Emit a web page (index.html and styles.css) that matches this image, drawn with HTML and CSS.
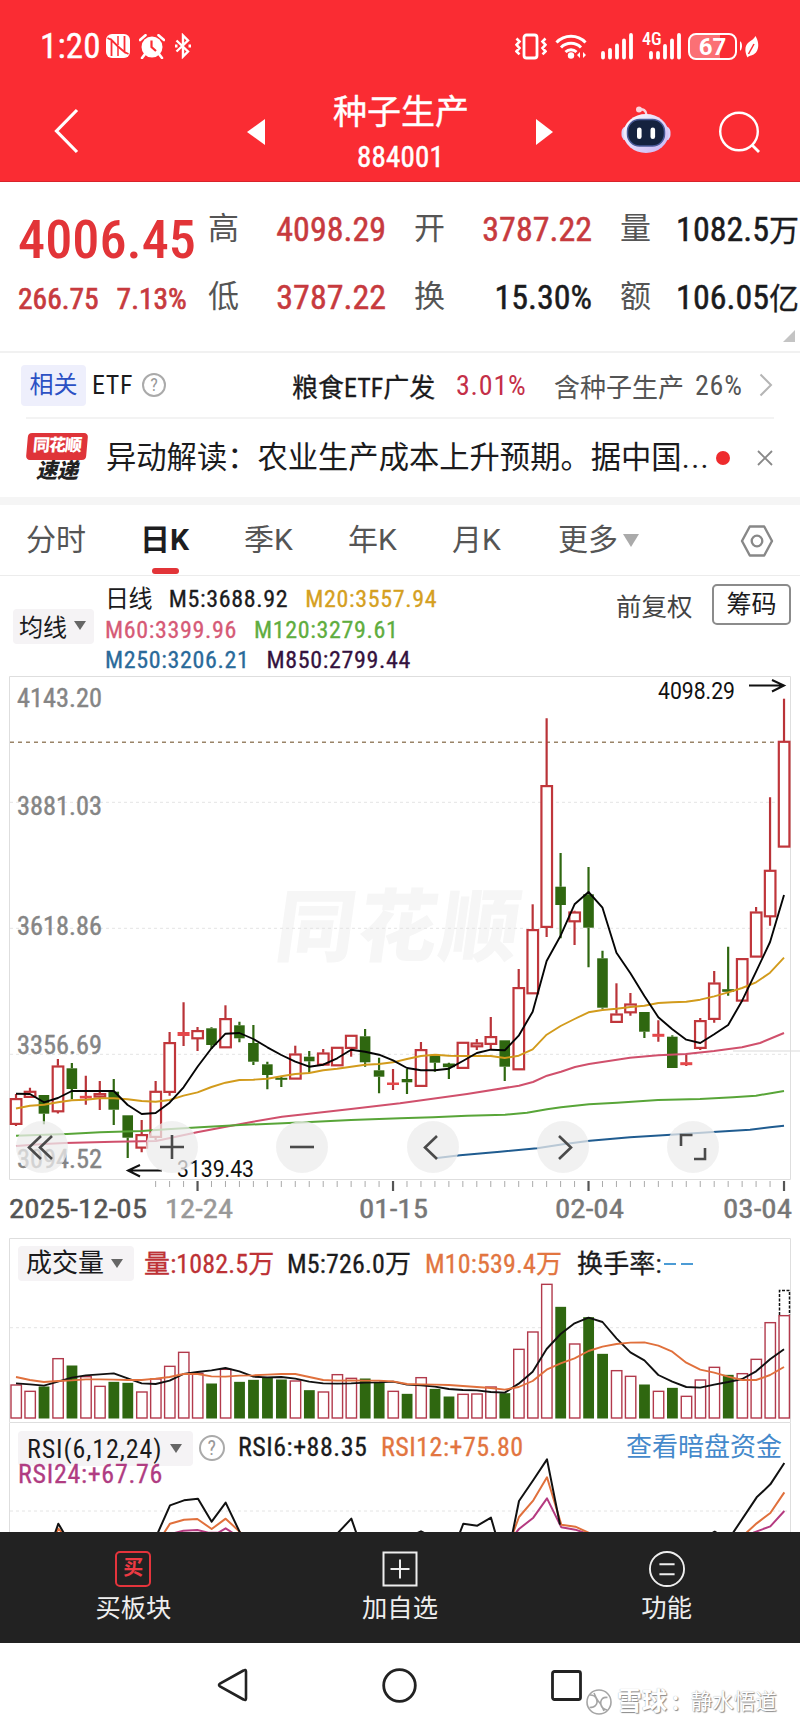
FILE: index.html
```
<!DOCTYPE html>
<html lang="zh-CN">
<head>
<meta charset="utf-8">
<title>种子生产 884001</title>
<link rel="stylesheet" href="styles.css">
</head>
<body>
<header class="header">
  <div class="status">
    <div class="status-left">
      <span class="clock">1:20</span>
      <svg class="i-nfc" width="24" height="24" viewBox="0 0 24 24"><rect x="0" y="0" width="24" height="24" rx="6" fill="#fff"/><path d="M5.500 22V6L12 12.500L18.500 18V2M1.500 4L5.500 6M22.500 20L18.500 18" fill="none" stroke="#fa2c33" stroke-width="1.800"/><path d="M12 2v9M12 22v-9" stroke="#fa2c33" stroke-width="1.500"/></svg>
      <svg class="i-alarm" width="26" height="25" viewBox="0 0 26 25"><path d="M1 6L6.500 1.200M25 6L19.500 1.200M6 20L3 24M20 20L23 24" stroke="#fff" stroke-width="2.600" stroke-linecap="round"/><circle cx="13" cy="13" r="10.500" fill="#fff"/><path d="M12.500 6.500V13L17 17" fill="none" stroke="#fa2c33" stroke-width="2.200"/></svg>
      <svg class="i-bt" width="18" height="26" viewBox="0 0 18 26"><path d="M2.500 7.500L14 18.500L9 23.500V2.500L14 7.500L2.500 18.500" fill="none" stroke="#fff" stroke-width="2.400"/><path d="M1 13h2.500M14.500 13H17" stroke="#fff" stroke-width="2.800"/></svg>
    </div>
    <div class="status-right">
      <svg width="32" height="27" viewBox="0 0 32 27"><rect x="9" y="2" width="13" height="23" rx="2.500" fill="none" stroke="#fff" stroke-width="2.800"/><path d="M1.500 5.500l3 3-3 3.300 3 3.300-3 3.300 3 3M30.500 5.500l-3 3 3 3.300-3 3.300 3 3.300-3 3" fill="none" stroke="#fff" stroke-width="2.600"/></svg>
      <svg class="i-wifi" width="33" height="27" viewBox="0 0 33 27"><path d="M1.500 9.500a20 20 0 0 1 29 0M6 14.500a14 14 0 0 1 20 0M10.500 19a8 8 0 0 1 11 0" fill="none" stroke="#fff" stroke-width="3"/><circle cx="16" cy="22.500" r="3.200" fill="#fff"/><path d="M25 19v6l-3-3zM28 19v6l3-3z" fill="#fff"/></svg>
      <svg class="i-sig" width="32" height="27" viewBox="0 0 32 27"><path d="M2 20v4.500M9 17v7.500M16 12.500v12M23 7.500v17M30 2v22.500" stroke="#fff" stroke-width="3.800" stroke-linecap="round"/></svg>
      <div class="net"><span class="net-label">4G</span><svg width="32" height="27" viewBox="0 0 32 27"><path d="M2 20v4.500M9 20v4.500M16 13v11.500M23 7.500v17M30 2v22.500" stroke="#fff" stroke-width="3.800" stroke-linecap="round"/></svg></div>
      <div class="battery">67</div>
      <svg class="i-leaf" width="20" height="25" viewBox="0 0 20 25"><path d="M0 8q2 4 0 8z" fill="#fff" stroke="#fff" stroke-width="2"/><path d="M15.500 2C18 6 20 13 16 18.500C13 22 9 21 7.500 23.500C5 19 4 12 8.500 8.500C11 6.500 14 5 15.500 2z" fill="#fff"/><path d="M8.500 20L14 10" stroke="#fa2c33" stroke-width="1.500"/></svg>
    </div>
  </div>
  <nav class="nav">
    <svg class="back" width="26" height="46" viewBox="0 0 26 46"><path d="M24 2L3.500 23L24 44" fill="none" stroke="#fff" stroke-width="3.200"/></svg>
    <svg class="prev" width="18" height="26" viewBox="0 0 18 26"><path d="M18 0v26L0 13z" fill="#fff"/></svg>
    <div class="name"><h1>种子生产</h1><p>884001</p></div>
    <svg class="next" width="17" height="26" viewBox="0 0 17 26"><path d="M0 0v26L17 13z" fill="#fff"/></svg>
    <svg class="robot" width="50" height="48" viewBox="0 0 50 48"><defs><linearGradient id="head" x1="0" y1="0" x2="1" y2="1"><stop offset="0" stop-color="#fff"/><stop offset="1" stop-color="#c5b2f4"/></linearGradient></defs><path d="M17 3.500Q25 2 25.500 9" fill="none" stroke="#f9d5e2" stroke-width="2.400"/><circle cx="18" cy="3.500" r="3" fill="#fbd5df"/><rect x="0.500" y="20" width="49" height="15" rx="6" fill="#d9d2fa"/><ellipse cx="25" cy="27.500" rx="22.500" ry="19.500" fill="url(#head)"/><rect x="6.500" y="13.500" width="37" height="26.500" rx="12" fill="#15223f" stroke="#4a5a98" stroke-width="1.500"/><rect x="16" y="21.500" width="4.600" height="11.500" rx="2.300" fill="#fff"/><rect x="29.500" y="21.500" width="4.600" height="11.500" rx="2.300" fill="#fff"/></svg>
    <svg class="search" width="42" height="43" viewBox="0 0 42 43"><circle cx="20" cy="20.500" r="18.800" fill="none" stroke="#fff" stroke-width="2.400"/><path d="M33 34l7 7" stroke="#fff" stroke-width="2.800"/></svg>
  </nav>
</header>

<section class="quote">
  <div class="last"><div class="price">4006.45</div><div class="delta"><span>266.75</span><span>7.13%</span></div></div>
  <div class="facts">
    <span class="k">高</span><span class="v up">4098.29</span><span class="k">开</span><span class="v up">3787.22</span><span class="k">量</span><span class="v">1082.5<small>万</small></span>
    <span class="k">低</span><span class="v up">3787.22</span><span class="k">换</span><span class="v">15.30%</span><span class="k">额</span><span class="v">106.05<small>亿</small></span>
  </div>
  <i class="corner"></i>
</section>

<section class="etf">
  <span class="tag">相关</span><span class="etf-label">ETF</span>
  <span class="help">?</span>
  <span class="fund">粮食ETF广发</span><span class="fund-pct">3.01%</span><span class="hold">含种子生产</span><span class="hold-pct">26%</span>
  <svg class="go" width="14" height="24" viewBox="0 0 14 24"><path d="M1.500 1.500L12 12L1.500 22.500" fill="none" stroke="#b5b5b5" stroke-width="2"/></svg>
</section>

<section class="news">
  <div class="brand"><span class="brand-top">同花顺</span><span class="brand-bottom">速递</span></div>
  <p>异动解读：农业生产成本上升预期。据中国<span class="dots">...</span></p>
  <i class="dot"></i>
  <svg class="close" width="16" height="16" viewBox="0 0 16 16"><path d="M1 1l14 14M15 1L1 15" stroke="#888" stroke-width="1.800"/></svg>
</section>

<nav class="tabs">
  <span>分时</span><span class="on">日K</span><span>季K</span><span>年K</span><span>月K</span><span class="more">更多<i class="caret"></i></span>
  <svg class="hex" width="34" height="32" viewBox="0 0 34 32"><path d="M9.800 1.500h14.400L32 16l-7.800 14.500H9.800L2 16z" fill="none" stroke="#888" stroke-width="2.400" stroke-linejoin="round"/><circle cx="17" cy="16" r="5.300" fill="none" stroke="#888" stroke-width="2.300"/></svg>
</nav>

<section class="legend">
  <button class="pick ma">均线<i class="caret"></i></button>
  <div class="ma-list">
    <div><span>日线</span><span class="m5">M5:3688.92</span><span class="m20">M20:3557.94</span></div>
    <div><span class="m60">M60:3399.96</span><span class="m120">M120:3279.61</span></div>
    <div><span class="m250">M250:3206.21</span><span class="m850">M850:2799.44</span></div>
  </div>
  <span class="adjust">前复权</span>
  <button class="chips">筹码</button>
</section>

<section class="kline">
  <svg id="kline" width="800" height="562" viewBox="0 676 800 562"></svg>
  <div class="controls">
    <span><svg width="52" height="52"><path d="M25 15L13 26.500L25 38M36 15L24 26.500L36 38"/></svg></span>
    <span><svg width="52" height="52"><path d="M14 26h24M26 14v24"/></svg></span>
    <span><svg width="52" height="52"><path d="M14 26h24"/></svg></span>
    <span><svg width="52" height="52"><path d="M30 15L18 26.500L30 38"/></svg></span>
    <span><svg width="52" height="52"><path d="M22 15L34 26.500L22 38"/></svg></span>
    <span><svg width="52" height="52"><path d="M14 25V14h11.500M27 38h11V27"/></svg></span>
  </div>
</section>

<section class="volume">
  <svg id="volume" width="800" height="184" viewBox="0 1238 800 184"></svg>
  <div class="panel-head vol-head">
    <button class="pick">成交量<i class="caret"></i></button>
    <span class="vol">量:1082.5万</span><span class="v5">M5:726.0万</span><span class="v10">M10:539.4万</span><span class="turn">换手率:</span><span class="none"><i></i><i></i></span>
  </div>
</section>

<section class="rsi">
  <svg id="rsi" width="800" height="110" viewBox="0 1422 800 110"></svg>
  <div class="panel-head rsi-head">
    <button class="pick">RSI(6,12,24)<i class="caret"></i></button>
    <span class="help">?</span>
    <span class="r6">RSI6:+88.35</span><span class="r12">RSI12:+75.80</span><a>查看暗盘资金</a>
  </div>
  <div class="r24">RSI24:+67.76</div>
</section>

<footer class="bar">
  <div><span class="buy-icon">买</span>买板块</div>
  <div><svg width="36" height="36"><path d="M1.500 1.500h33v33h-33zM18 8.500v19M8.500 18h19" fill="none" stroke="#eee" stroke-width="2"/></svg>加自选</div>
  <div><svg width="38" height="36" viewBox="0 0 38 38"><circle cx="19" cy="19" r="18" fill="none" stroke="#eee" stroke-width="2"/><path d="M11 14h16M11 24.500h16" stroke="#eee" stroke-width="2.200"/></svg>功能</div>
</footer>

<div class="system">
  <svg class="s-back" width="31" height="34" viewBox="0 0 31 34"><path d="M29 3.500Q29 1 26.500 2.500L3 15.500Q1 17 3 18.500L26.500 31.500Q29 33 29 30.500z" fill="none" stroke="#222" stroke-width="2.600"/></svg>
  <svg class="s-home" width="35" height="35"><circle cx="17.500" cy="17.500" r="15.800" fill="none" stroke="#222" stroke-width="2.800"/></svg>
  <svg class="s-recent" width="31" height="31"><rect x="1.500" y="1.500" width="28" height="28" rx="2" fill="none" stroke="#222" stroke-width="2.800"/></svg>
  <div class="credit"><svg width="28" height="28" viewBox="0 0 28 28"><g fill="none" stroke="#a5a5a5" stroke-width="1.600"><circle cx="14" cy="14" r="12"/><path d="M5 7q5 0 6.500 4t-1 6.500q-1.500 2-6 2M22 22q-5-1-6-5t1.500-6.500q2-1.500 5-1M9 5q3 7 5 9t5 9"/></g></svg><b>雪球</b><b class="colon">:</b><span>静水悟道</span></div>
</div>
<script src="chart.js"></script>
</body>
</html>
```
FILE: styles.css
```
* { box-sizing: border-box; }
body, h1, p { margin: 0; font-weight: 400; }
i { font-style: normal; display: block; }
svg { display: block; flex: none; }
span, b, a { white-space: nowrap; }
body {
  width: 800px; height: 1727px; overflow: hidden; background: #fff; color: #1b1b1d;
  font-family: Roboto, "Noto Sans CJK SC", sans-serif; font-stretch: 85%;
}
button { font: inherit; border: 0; padding: 0; color: inherit; text-align: left; white-space: nowrap; }

.header { height: 182px; background: #fa2c33; color: #fff; border-bottom: 1px solid #d8242b; }
.status { height: 92px; display: flex; justify-content: space-between; padding: 0 40px 0 40px; }
.status-left, .status-right { display: flex; align-items: center; }
.clock { font-size: 35px; width: 66px; letter-spacing: .2px; -webkit-text-stroke: .4px; }
.i-alarm { margin-left: 9px; }
.i-bt { margin-left: 9px; }
.i-wifi { margin-left: 8px; }
.i-sig { margin-left: 13px; }
.net { display: flex; width: 39px; margin-left: 9px; justify-content: flex-end; position: relative; }
.net-label { position: absolute; left: 0; top: -2px; font-size: 18px; line-height: 16px; font-weight: 500; }
.battery { width: 49px; height: 27px; margin-left: 7px; border: 2px solid #fff; border-radius: 8px; background: linear-gradient(90deg, #fb7075 67%, #fa2c33 67%); font-size: 24px; line-height: 24px; font-weight: 700; text-align: center; font-stretch: 100%; }
.i-leaf { margin-left: 3px; }
.nav { height: 89px; display: grid; grid-template-columns: 194px 86px 203px 85px 98px 42px; padding-left: 53px; align-items: start; }
.back { margin-top: 16px; }
.prev, .next { margin-top: 27px; }
.robot { margin-top: 14px; }
.search { margin-top: 19px; }
.name { width: 135px; text-align: center; }
.name h1 { font-size: 34px; line-height: 40px; white-space: nowrap; -webkit-text-stroke: .4px; }
.name p { font-size: 29px; line-height: 46px; margin-top: 2px; letter-spacing: .2px; -webkit-text-stroke: .5px; }

.quote { height: 171px; display: flex; position: relative; border-bottom: 2px solid #f1f1f1; }
.last { width: 209px; padding: 24px 0 0 18px; color: #e23438; flex: none; }
.price { font-size: 54.300px; line-height: 68px; font-weight: 500; }
.delta { display: flex; gap: 18px; font-size: 29.500px; line-height: 50px; color: #c73a3e; -webkit-text-stroke: .7px; }
.facts { display: grid; grid-template-columns: 30px 148px 59px 147px 59px 148px; grid-template-rows: 68px 67px; padding-top: 13px; margin-left: -1px; font-size: 34px; line-height: 68px; }
.k { font-size: 31px; color: #555; }
.facts .k:nth-child(6n+3), .facts .k:nth-child(6n+5) { padding-left: 28px; }
.v { text-align: right; -webkit-text-stroke: .5px; }
.v small { font-size: 30px; line-height: 1; -webkit-text-stroke: .3px; }
.up { color: #c73a3e; }
.corner { position: absolute; right: 5px; bottom: 9px; border: 6px solid; border-color: transparent #c4c4c4 #c4c4c4 transparent; }

.etf { height: 66px; margin: 0 26px; border-bottom: 2px solid #f3f3f3; display: flex; align-items: center; font-size: 26px; }
.tag { width: 65px; height: 41px; margin-left: -5px; background: #eeeffc; border-radius: 4px; color: #2b50c4; font-size: 24px; line-height: 40px; text-align: center; }
.etf-label { width: 43px; margin-left: 6px; letter-spacing: .6px; }
.help { width: 24px; height: 24px; border: 2px solid #aaa; border-radius: 50%; color: #999; font-size: 18px; line-height: 20px; text-align: center; flex: none; }
.etf .help { margin-left: 7px; }
.fund { width: 149px; margin-left: 126px; -webkit-text-stroke: .3px; }
.fund-pct { width: 71px; margin-left: 15px; color: #c42f48; font-size: 28px; letter-spacing: .8px; }
.hold { width: 129px; margin-left: 27px; color: #555; }
.hold-pct { width: 49px; margin-left: 12px; color: #555; font-size: 28px; letter-spacing: .8px; }
.go { margin-left: 15px; }

.news { height: 86px; border-bottom: 8px solid #f5f5f5; display: flex; align-items: center; padding-left: 27px; }
.brand { width: 60px; height: 51px; text-align: center; font-weight: 900; font-style: italic; }
.brand-top { display: block; height: 27px; background: #df3439; color: #fff; border-radius: 4px; transform: skewX(-5deg); font-size: 17px; line-height: 25px; letter-spacing: -1px; font-style: normal; }
.brand-bottom { display: block; font-size: 21px; line-height: 23px; color: #222; }
.news p { width: 607px; margin-left: 19px; font-size: 30.300px; line-height: 60px; white-space: nowrap; }
.dots { letter-spacing: 1.500px; }
.dot { width: 14px; height: 14px; border-radius: 50%; background: #ee2b2d; margin-left: 3px; }
.close { margin-left: 27px; }

.tabs { height: 71px; border-bottom: 1px solid #ececec; display: grid; grid-template-columns: 114px 104px 104px 104px 106px 182px 34px; padding-left: 26px; font-size: 30px; line-height: 70px; color: #555; font-stretch: 100%; }
.tabs .on { color: #1d1d1f; font-weight: 700; position: relative; }
.tabs .on::after { content: ""; position: absolute; left: 12px; bottom: 1px; width: 27px; height: 6px; border-radius: 3px; background: #e23438; }
.caret { width: 0; height: 0; border: 6.500px solid transparent; border-top: 9px solid #666; border-bottom: 0; }
.more { display: flex; align-items: center; }
.more .caret { margin: 0 0 0 5px; border-width: 13px 8px 0; border-top-color: #aaa; }
.hex { margin-top: 20px; }

.legend { height: 100px; display: flex; font-size: 24px; }
.pick { display: flex; align-items: center; background: #f5f3f5; border-radius: 4px; height: 35px; }
.ma { width: 81px; margin: 33px 0 0 13px; padding: 0 0 2px 6px; font-size: 24px; gap: 7px; flex: none; }
.ma-list { margin: 8px 0 0 11px; width: 511px; }
.ma-list div { display: flex; gap: 17px; height: 30.500px; line-height: 30.500px; letter-spacing: .65px; }
.ma-list div span + span, .m60, .m250 { -webkit-text-stroke: .3px; }
.ma-list div:first-child span:first-child { letter-spacing: -.6px; }
.m20 { color: #d5a021; } .m60 { color: #d65a76; } .m120 { color: #5fad3f; } .m250 { color: #2a6a9a; } .m850 { color: #35123e; }
.adjust { width: 96px; font-size: 25.500px; line-height: 62px; color: #444; }
.chips { width: 79px; height: 41px; margin-top: 8px; border: 2px solid #8b8b8b; border-radius: 5px; background: #fff; font-size: 25px; line-height: 36px; text-align: center; }

.kline { height: 562px; position: relative; }
.controls { position: absolute; left: 16px; top: 445px; width: 703px; display: flex; justify-content: space-between; }
.controls span { width: 52px; height: 52px; border-radius: 50%; background: rgba(236, 236, 236, .75); }
.controls path { fill: none; stroke: #4a4a4a; stroke-width: 2.600; }
.volume { height: 184px; position: relative; }
.rsi { height: 110px; position: relative; overflow: hidden; }
.panel-head { position: absolute; left: 18px; top: 8px; display: flex; height: 35px; line-height: 37px; font-size: 26px; }
.panel-head > span { -webkit-text-stroke: .3px; }
.vol-head .pick { width: 116px; padding-left: 8px; gap: 7px; margin-right: 10px; }
.vol-head { letter-spacing: .15px; }
.vol { width: 143px; color: #bd3135; } .v5 { width: 138px; } .v10 { width: 152px; color: #e27540; } .turn { width: 87px; }
.none { display: flex; gap: 5px; align-items: center; }
.none i { width: 12px; height: 2px; background: #4b9bd5; }
.rsi-head .pick { width: 175px; padding-left: 9px; gap: 8px; margin: 1px 6px 0 0; letter-spacing: .9px; }
.rsi-head .help { width: 26px; height: 26px; line-height: 22px; font-size: 20px; margin: 5px 13px 0 0; -webkit-text-stroke: 0; }
.rsi-head { letter-spacing: .5px; line-height: 34px; }
.r6 { width: 143px; } .r12 { width: 245px; color: #e27540; }
.panel-head a { color: #4489cb; letter-spacing: 0; }
.r24 { position: absolute; left: 18px; top: 41px; font-size: 26px; line-height: 22px; color: #b03c82; letter-spacing: .7px; -webkit-text-stroke: .3px; }

.bar { height: 111px; background: #222; color: #eee; display: grid; grid-template-columns: repeat(3, 1fr); font-size: 25.300px; }
.bar div { display: flex; flex-direction: column; align-items: center; padding-top: 19px; gap: 4px; line-height: 36px; }
.buy-icon { width: 36px; height: 36px; border: 2px solid #e5343c; border-radius: 5px; color: #ee3a43; font-size: 20px; font-weight: 700; line-height: 31px; text-align: center; }
.system { height: 84px; display: flex; align-items: flex-start; padding-left: 217px; }
.s-back { margin-top: 25px; } .s-home { margin: 25px 0 0 134px; } .s-recent { margin: 27px 0 0 134px; }
.credit { display: flex; align-items: center; margin: 44px 0 0 3px; font-size: 21.500px; line-height: 30px; color: #fff; text-shadow: 1px 1px 1px #888, 0 0 1px #aaa; }
.credit b { font-size: 25px; margin-left: 4px; } .credit .colon { margin: 0 12px 0 5px; }

.axis { font-size: 25px; stroke-width: .4px; }
.mark { font-size: 23px; fill: #111; font-stretch: 100%; }
.watermark { font-size: 79px; font-weight: 900; fill: #f6f6f6; }
```
FILE: chart.js
```
const STEP = 13.964, X0 = 16;
const x = i => X0 + i * STEP;
const RED = '#b93338', GREEN = '#2f6710';

// [direction, body top, body bottom, high, low] in panel coordinates
const candles = [
  [1,1098.3,1124.3,1094,1126],[1,1091,1097.3,1087.7,1098],[0,1095,1113.7,1095,1124.3],[1,1065.7,1111.7,1059,1113.5],
  [0,1068.3,1089,1063,1099.3],[1,1096.3,1098,1075.7,1104.7],[1,1093.3,1097,1081,1110],[0,1091.7,1109.7,1079,1125],
  [0,1115.3,1137.7,1115.3,1158],[1,1134.3,1148,1120,1152.3],[1,1091,1137.3,1081,1140],[1,1042.3,1092.3,1032,1095.7],
  [1,1032.5,1035.5,1002.3,1046],[1,1030.3,1038.7,1027,1051],[0,1028.3,1045,1027.3,1049],[1,1018.3,1047.7,1005.3,1047.7],
  [0,1025.3,1038.3,1021.7,1042.3],[0,1043,1061.7,1025,1065],[0,1064.3,1075,1061.7,1089.3],[0,1078.3,1079.3,1076.7,1087],
  [1,1053.7,1079,1045.7,1079],[0,1056.7,1061.3,1051,1072.7],[1,1052.7,1065,1049,1065],[1,1047,1065.7,1047,1065.7],
  [1,1035,1048.3,1035,1056.7],[0,1036.3,1062.3,1029,1066.7],[0,1070.3,1076.7,1057.7,1093.3],[1,1083,1084.5,1069,1090],
  [0,1079,1082.3,1069,1094],[1,1049.3,1086.3,1042,1086.3],[0,1056,1062.7,1055,1071.7],[0,1064,1066.7,1062.7,1079],
  [1,1042,1068.3,1042,1068.3],[1,1042.7,1046.7,1039,1050],[1,1036.3,1044.3,1017,1050],[0,1040.3,1066.7,1040.3,1081],
  [1,987.3,1069.7,969,1069.7],[1,929.3,993.7,904.3,993.7],[1,785.3,927.3,718.3,937],[0,886.7,905,853,938.3],
  [1,911.7,921.7,910.7,945],[0,894.3,927.7,867,967.3],[0,958.3,1007.7,950.7,1008.7],[1,1013.7,1022.3,983.3,1022.3],
  [1,1003.7,1012.7,993,1015.7],[0,1012,1031.7,1012,1038],[1,1034.3,1036.3,1020.3,1041.7],[0,1036.7,1068,1035.3,1068],
  [1,1062.7,1064.7,1053.7,1066],[1,1020.3,1048.3,1018,1050],[1,982.7,1019.3,971,1022.7],[0,989.7,991.3,946.7,995.7],
  [1,958.3,1001,958.3,1001],[1,911.7,957,907,957],[1,870,916.7,797.3,925.7],[1,741,847,698.7,847]
];
const ma5 = [1093.7,1094,1102.3,1098,1091,1091,1091,1091,1105,1114,1113,1102.7,1087.3,1066.7,1048.3,1033.7,1033,1039,1047.3,1055,1061.7,1066.7,1064.7,1058.3,1049.7,1051.7,1054.7,1060.3,1068,1070.3,1070.3,1068.7,1061,1053,1049.7,1050.3,1035.7,1011.7,961,935.7,904.3,892,907.7,952.7,973.3,996,1017.3,1029.3,1039.7,1043,1034.3,1025,1000.7,971.7,942,895];
const ma20 = [1108.5,1105.7,1104.7,1102.3,1100.3,1099.7,1098.3,1098.3,1099.3,1101,1101.7,1100,1095.7,1092.3,1087,1082.7,1080,1079.7,1078.7,1076.3,1074,1073,1070.3,1068.7,1066.7,1064.7,1064,1062.3,1059,1056,1054.7,1055.7,1056,1056,1056,1058,1055.7,1049.3,1034.7,1026,1019,1012.3,1010,1008.7,1007,1005.7,1003,1002.3,1001.7,999.7,996.3,992.3,988,982.3,972.7,957.7];
const ma60 = [[16,1146],[44,1144],[65,1143],[114,1141.7],[156,1141],[197,1132.3],[226,1126.7],[253,1121.7],[282,1116.7],[309,1113.7],[351,1109],[400,1103.3],[467,1094],[519,1085.7],[533,1082],[547,1075.7],[561,1071.7],[575,1067],[589,1064],[630,1057.7],[658,1055.3],[686,1054],[714,1051],[742,1047.3],[760,1043],[784,1033]];
const ma120 = [[16,1135.7],[67,1134],[100,1132.3],[142,1131],[167,1129.3],[200,1127.3],[240,1125],[283,1123.3],[310,1122],[351,1120],[400,1118.3],[433,1117.3],[467,1115.7],[505,1114.7],[527,1112.7],[547,1109.3],[561,1107.3],[589,1104.3],[617,1102.7],[658,1100],[700,1099],[733,1097.3],[756,1095.7],[784,1091]];
const ma250 = [[437,1158],[460,1155.3],[500,1151.7],[537,1148.3],[563,1144.3],[590,1140.7],[630,1137.3],[667,1135],[717,1131.7],[750,1129.7],[770,1127.3],[784,1125.7]];

const line = (pts, color, w = 2) => `<polyline points="${pts.map(p => p.join()).join(' ')}" fill="none" stroke="${color}" stroke-width="${w}" stroke-linejoin="round"/>`;
const series = (ys, color) => line(ys.map((y, i) => [x(i), y]), color, 1.9);
const grid = y => `<path d="M10 ${y}H790" stroke="#e4e4e4" stroke-dasharray="3 3"/>`;
const text = (s, tx, ty, w, cls, color) => `<text x="${tx}" y="${ty}" textLength="${w}" lengthAdjust="spacingAndGlyphs" class="${cls}"${color ? ` fill="${color}" stroke="${color}"` : ''}>${s}</text>`;

function candle([up, t, b, h, l], i) {
  const c = up ? RED : GREEN, cx = x(i);
  const wick = `<path d="M${cx} ${h}V${t}M${cx} ${b}V${l}" stroke="${c}" stroke-width="2.200"/>`;
  if (b - t < 3.2) return wick + `<rect x="${cx - 6}" y="${t - .5}" width="12" height="${Math.max(2, b - t + 1)}" fill="${up ? '#e5484b' : c}"/>`;
  return wick + (up
    ? `<rect x="${cx - 5.2}" y="${t + .8}" width="10.6" height="${b - t - 1.2}" fill="#fff" stroke="#c0363b" stroke-width="2.200"/>`
    : `<rect x="${cx - 5.3}" y="${t}" width="10.6" height="${b - t}" fill="${c}"/>`);
}

let k = `<text class="watermark" transform="translate(273 955) skewX(-8)" textLength="243">同花顺</text>`;
k += [802.3, 928.3, 1054.3].map(grid).join('');
k += '<path d="M733 1051h67" stroke="#e6e6e6" stroke-width="1.500"/>';
k += '<path d="M9.500 1179.500V676.500H790.500V1179.500z" fill="none" stroke="#dedede"/>';
k += '<path d="M10 742.300H780" stroke="#9a8468" stroke-width="1.400" stroke-dasharray="4 4"/>';
[['4143.20', 707], ['3881.03', 814.5], ['3618.86', 934.5], ['3356.69', 1054], ['3094.52', 1167.5]].forEach(([s, y]) => k += text(s, 17, y, 85, 'axis', '#858585'));
k += candles.map(candle).join('');
k += line(ma60, '#d0506c') + line(ma120, '#58a538') + line(ma250, '#205c90') + series(ma20, '#d29b1c') + series(ma5, '#050505');
k += text('4098.29', 658, 699, 77, 'mark') + '<path d="M749 685.500h34M772 680l12 5.500-12 6" fill="none" stroke="#111" stroke-width="2"/>';
k += text('3139.43', 177, 1177, 77, 'mark') + '<path d="M162 1170.500h-33M140 1165l-12 5.500 12 6" fill="none" stroke="#111" stroke-width="2"/>';
for (let i = 10; i < 56; i++) {
  const major = [13, 27, 41, 55].includes(i);
  k += `<path d="M${x(i)} 1181v${major ? 10 : 6}" stroke="${major ? '#555' : '#aaa'}" stroke-width="${major ? 2.2 : 1}"/>`;
}
[['2025-12-05', 9, 138, '#555'], ['12-24', 165, 68, '#999'], ['01-15', 359, 69, '#777'], ['02-04', 555, 69, '#777'], ['03-04', 723, 69, '#777']]
  .forEach(([s, tx, w, c]) => k += text(s, tx, 1218, w, 'axis', c));
document.getElementById('kline').innerHTML = k;

const vol = [465,484,471,386,408,440,469,457,460,486,447,409,367,430,462,418,457,451,443,450,453,482,486,434,445,447,457,484,493,443,478,501,493,492,471,491,358,306,163,232,342,263,373,422,439,465,484,475,499,450,412,436,431,388,278,257];
const vm5 = [460,463,467,455,443,436,433,430,445,460,462,452,432,426,421,414,424,440,442,441,446,455,460,461,460,458,457,455,464,466,470,477,480,481,486,488,461,425,357,312,280,263,276,325,367,391,435,455,471,473,464,456,447,424,388,358];
const vm10 = [441,450,456,453,451,448,448,449,450,450,446,441,432,432,439,440,437,436,434,432,432,441,450,452,451,452,452,454,462,463,464,465,468,471,474,479,471,453,419,400,385,363,350,342,338,337,347,365,398,419,428,440,450,450,435,411];
const vy = v => 1230 + v / 3;
let v = '<path d="M9.500 1422V1238.500H790.500V1422" fill="none" stroke="#dedede"/>' + grid(1327.7);
v += vol.map((t, i) => {
  const up = candles[i][0], y = vy(t);
  return up ? `<rect x="${x(i) - 5}" y="${y}" width="10.400" height="${1418 - y}" fill="#fff" stroke="#b23a4c" stroke-width="1.400"/>`
            : `<rect x="${x(i) - 5.3}" y="${y - .5}" width="10.800" height="${1419 - y}" fill="${GREEN}"/>`;
}).join('');
v += '<path d="M779.500 1315V1290.500H789.500V1315" fill="none" stroke="#111" stroke-width="1.500" stroke-dasharray="3 1.500"/>';
v += series(vm5.map(vy), '#111') + series(vm10.map(vy), '#e0703c');
document.getElementById('volume').innerHTML = v;

let r = '<path d="M9.500 1532V1422.500H790.500V1532" fill="none" stroke="#dedede"/>' + grid(1511);
const ry = pts => pts.map(([a, b]) => [a / 3, 1230 + b / 3]);
const rsi = (c, ...groups) => r += groups.map(g => line(ry(g), c)).join('');
rsi('#b53a80', [[520,910],[550,902],[592,900],[625,908],[655,908],[677,895],[700,910]], [[1540,918],[1557,897],[1600,863],[1641,805],[1684,892],[1726,899],[1765,912]], [[2260,908],[2311,889],[2353,843]]);
rsi('#e0703c', [[168,912],[175,896],[190,912]], [[490,912],[510,881],[552,869],[592,867],[635,897],[677,866],[722,908]], [[1538,912],[1557,861],[1600,811],[1641,742],[1684,884],[1726,890],[1770,910]], [[2235,912],[2270,880],[2311,849],[2353,787]]);
rsi('#111', [[162,918],[175,881],[192,910]], [[472,912],[510,826],[552,811],[594,806],[635,875],[677,818],[722,912]], [[1005,918],[1054,866],[1070,912]], [[1250,910],[1263,904],[1275,910]], [[1378,912],[1390,881],[1432,887],[1473,863],[1487,912]], [[1537,912],[1557,813],[1600,750],[1641,688],[1680,884]], [[2132,912],[2144,905],[2156,912]], [[2198,910],[2270,802],[2311,763],[2353,699]]);
document.getElementById('rsi').innerHTML = r;
```
